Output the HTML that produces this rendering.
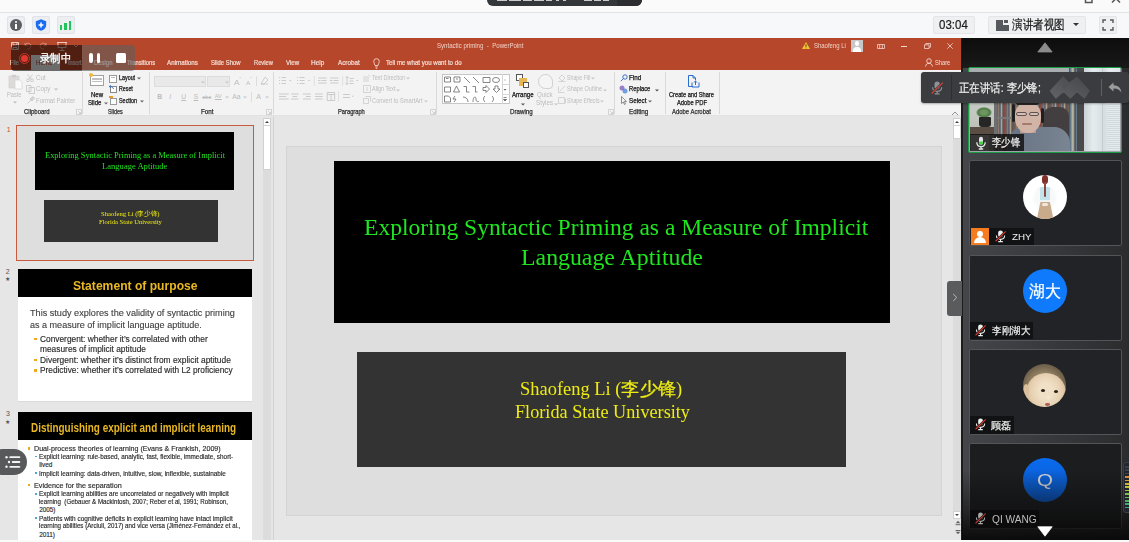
<!DOCTYPE html><html><head><meta charset="utf-8">
<style>
*{box-sizing:border-box;margin:0;padding:0}
html,body{width:1129px;height:542px;overflow:hidden}
body{position:relative;background:#fafafa;font-family:"Liberation Sans",sans-serif;color:#222}
.a{position:absolute}
.t{position:absolute;white-space:nowrap;line-height:1;transform-origin:0 0}
svg.a{overflow:visible}
</style></head><body>
<div class="a" style="left:0px;top:0px;width:1129px;height:12px;background:#fafafa;"></div>
<div class="a" style="left:487px;top:-10px;width:155px;height:16px;background:#34373a;border-radius:0 0 6px 6px"></div>
<div class="a" style="left:617px;top:-10px;width:25px;height:16px;background:#2b2d30;border-radius:0 0 6px 0"></div>
<div class="a" style="left:497px;top:0px;width:10px;height:1px;background:rgba(255,255,255,0.75);"></div>
<div class="a" style="left:509px;top:0px;width:12px;height:1px;background:rgba(255,255,255,0.75);"></div>
<div class="a" style="left:523px;top:0px;width:9px;height:1px;background:rgba(255,255,255,0.75);"></div>
<div class="a" style="left:534px;top:0px;width:10px;height:1px;background:rgba(255,255,255,0.75);"></div>
<div class="a" style="left:546px;top:0px;width:6px;height:1px;background:rgba(255,255,255,0.75);"></div>
<div class="a" style="left:556px;top:0px;width:3px;height:1px;background:rgba(255,255,255,0.75);"></div>
<div class="a" style="left:563px;top:0px;width:3px;height:1px;background:rgba(255,255,255,0.75);"></div>
<div class="a" style="left:584px;top:0px;width:8px;height:1px;background:rgba(255,255,255,0.75);"></div>
<div class="a" style="left:594px;top:0px;width:7px;height:1px;background:rgba(255,255,255,0.75);"></div>
<div class="a" style="left:603px;top:0px;width:6px;height:1px;background:rgba(255,255,255,0.75);"></div>
<div class="a" style="left:0px;top:12px;width:1129px;height:1px;background:#e3e3e3;"></div>
<div class="a" style="left:0px;top:13px;width:1129px;height:25px;background:#f7f8fa;"></div>
<div class="a" style="left:7px;top:16px;width:18px;height:18px;background:#eceef1;border:1px solid #e0e3e7;border-radius:2px"></div>
<div class="a" style="left:32px;top:16px;width:18px;height:18px;background:#eceef1;border:1px solid #e0e3e7;border-radius:2px"></div>
<div class="a" style="left:57px;top:16px;width:18px;height:18px;background:#eceef1;border:1px solid #e0e3e7;border-radius:2px"></div>
<div class="a" style="left:10px;top:19px;width:12px;height:12px;border-radius:50%;background:#5c5e62"></div>
<div class="a" style="left:15px;top:21px;width:2px;height:2px;background:#fff;border-radius:1px"></div>
<div class="a" style="left:15px;top:24px;width:2px;height:5px;background:#fff;"></div>
<svg class="a" style="left:35px;top:19px" width="12" height="12" viewBox="0 0 12 12"><path d="M6 0.3 L11.2 2.2 V6 C11.2 9 9 10.8 6 11.8 C3 10.8 0.8 9 0.8 6 V2.2 Z" fill="#1a6cf5"></path><path d="M6 3.6V8.4M3.6 6H8.4" stroke="#fff" stroke-width="1.5"></path></svg>
<div class="a" style="left:59.5px;top:25px;width:2.7px;height:5px;background:#20c45b;"></div>
<div class="a" style="left:64.3px;top:22.5px;width:2.7px;height:7.5px;background:#20c45b;"></div>
<div class="a" style="left:68.5px;top:20.5px;width:2.7px;height:9.5px;background:#20c45b;"></div>
<div class="a" style="left:933px;top:16px;width:42px;height:18px;background:#eef0f2;border:1px solid #e3e5e8;border-radius:2px"></div>
<div class="t" style="left: 938.9px; top: 19px; font-size: 12.4px; color: rgb(26, 26, 26); --b: 29; --w: 28.79px; -webkit-text-stroke: 0.2px rgb(26, 26, 26); transform: scaleX(0.9282); transform-origin: 0px 0px;">03:04</div>
<div class="a" style="left:988px;top:16px;width:98px;height:18px;background:#eef0f2;border:1px solid #e3e5e8;border-radius:2px"></div>
<div class="a" style="left:996px;top:19.5px;width:12.5px;height:11px;background:#55585c;"></div>
<div class="a" style="left:1003px;top:19.5px;width:5.5px;height:5px;background:#eef0f2;"></div>
<div class="a" style="left:1004.3px;top:19.5px;width:4.2px;height:3.8px;background:#55585c;"></div>
<div class="t" style="left: 1011.6px; top: 18.95px; font-size: 12.5px; color: rgb(26, 26, 26); --w: 52.80px; -webkit-text-stroke: 0.25px rgb(26, 26, 26); transform: scaleX(0.8123); transform-origin: 0px 0px;">演讲者视图</div>
<div class="a" style="left:1072.5px;top:23px;width:0;height:0;border-left:3.5px solid transparent;border-right:3.5px solid transparent;border-top:3.5px solid #333"></div>
<div class="a" style="left:1099px;top:16px;width:18px;height:18px;background:#eef0f2;border:1px solid #e3e5e8;border-radius:2px"></div>
<svg class="a" style="left:1102px;top:19px" width="12" height="12" viewBox="0 0 12 12" fill="none" stroke="#55585c" stroke-width="1.4"><path d="M1 4V1H4M8 1H11V4M11 8V11H8M4 11H1V8"></path></svg>
<svg class="a" style="left:1084px;top:-5px" width="12" height="9" viewBox="0 0 12 9" fill="none" stroke="#555" stroke-width="1.5"><path d="M1.5 1V7.5H8V1M8 3H10V1"></path></svg>
<svg class="a" style="left:1110px;top:-6px" width="12" height="9" viewBox="0 0 12 9" fill="none" stroke="#555" stroke-width="1.5"><path d="M2 8.5L10 0.5M2 0.5L10 8.5"></path></svg>
<div class="a" style="left:0px;top:38px;width:962px;height:32px;background:#b7472a;"></div>
<svg class="a" style="left:10px;top:41px" width="75" height="10" viewBox="0 0 75 10" fill="none" stroke="#f3d6ce" stroke-width="0.9">
<path d="M1.5 1.5H8.5V8.5H1.5Z M3 1.5V4H7V1.5 M3 8.5V6.5H7V8.5"></path>
<path d="M15 4.5A3 3 0 1 1 17 8 M15 2V4.5H17.5" opacity=".5"></path>
<path d="M36 4.5A3 3 0 1 0 34 8 M36 2V4.5H33.5" opacity=".5"></path>
<path d="M47 1.5H57 M48 1.5V6.5H56V1.5 M52 6.5V9 M49.5 9.5H54.5"></path>
<path d="M64 4L66 6L68 4" stroke-width="0.8"></path>
</svg>
<div class="t" style="left: 437.24px; top: 43.0131px; font-size: 6.6px; color: rgb(240, 208, 198); --b: 48.4; --w: 86.33px; transform: scaleX(0.9238); transform-origin: 0px 0px;">Syntactic priming&nbsp; - &nbsp;PowerPoint</div>
<svg class="a" style="left:802px;top:42px" width="8" height="7" viewBox="0 0 8 7"><path d="M4 0L8 7H0Z" fill="#f4c431"></path><path d="M4 2.3V4.8M4 5.6V6.3" stroke="#333" stroke-width="0.9"></path></svg>
<div class="t" style="left: 814.24px; top: 43.0131px; font-size: 6.6px; color: rgb(240, 208, 198); --b: 48.4; --w: 31.83px; transform: scaleX(0.9042); transform-origin: 0px 0px;">Shaofeng Li</div>
<div class="a" style="left:851px;top:39.5px;width:12px;height:12px;background:#c7c7c7;"></div>
<div class="a" style="left:855px;top:41.3px;width:4px;height:4.5px;background:#fff;border-radius:50%"></div>
<div class="a" style="left:853px;top:46.5px;width:8px;height:5px;background:#fff;border-radius:4px 4px 0 0"></div>
<svg class="a" style="left:876.5px;top:43.5px" width="8" height="5" viewBox="0 0 8 5" fill="none" stroke="#f3d6ce" stroke-width="0.8"><path d="M0.5 0.5H7.5V4.5H0.5Z M2.7 0.5V4.5 M5.3 0.5V4.5"></path></svg>
<div class="a" style="left:901.3px;top:46px;width:5.5px;height:0.8px;background:#f3d6ce;"></div>
<svg class="a" style="left:923.5px;top:43px" width="7" height="6" viewBox="0 0 7 6" fill="none" stroke="#f3d6ce" stroke-width="0.8"><path d="M0.5 1.8H5V5.5H0.5Z M1.8 1.8V0.5H6.5V4.2H5"></path></svg>
<svg class="a" style="left:946.8px;top:43px" width="6" height="6" viewBox="0 0 6 6" fill="none" stroke="#f3d6ce" stroke-width="0.8"><path d="M0.3 0.3L5.7 5.7M5.7 0.3L0.3 5.7"></path></svg>
<svg class="a" style="left:925px;top:58px" width="9" height="9" viewBox="0 0 9 9" fill="none" stroke="#f3d6ce" stroke-width="0.9"><circle cx="4" cy="3" r="2.3"></circle><path d="M0.5 8.5C1 6 2.5 5.3 4 5.3C5.5 5.3 7 6 7.5 8.5"></path></svg>
<div class="t" style="left: 934.73px; top: 60.0087px; font-size: 6.8px; color: rgb(243, 221, 214); --b: 64.8; --w: 15.24px; transform: scaleX(0.8401); transform-origin: 0px 0px;">Share</div>
<div class="a" style="left:31px;top:55px;width:29px;height:15px;background:#f3f3f3;"></div>
<div class="t" style="left: 10.13px; top: 60.0087px; font-size: 6.8px; color: rgb(243, 221, 214); --b: 64.8; --w: 8.94px; -webkit-text-stroke: 0.2px rgb(243, 221, 214); transform: scaleX(0.8162); transform-origin: 0px 0px;">File</div>
<div class="t" style="left: 67.53px; top: 60.0087px; font-size: 6.8px; color: rgb(243, 221, 214); --b: 64.8; --w: 13.64px; -webkit-text-stroke: 0.2px rgb(243, 221, 214); transform: scaleX(0.8024); transform-origin: 0px 0px;">Insert</div>
<div class="t" style="left: 94.43px; top: 60.0087px; font-size: 6.8px; color: rgb(243, 221, 214); --b: 64.8; --w: 18.44px; -webkit-text-stroke: 0.2px rgb(243, 221, 214); transform: scaleX(0.871); transform-origin: 0px 0px;">Design</div>
<div class="t" style="left: 126.73px; top: 60.0087px; font-size: 6.8px; color: rgb(243, 221, 214); --b: 64.8; --w: 28.04px; -webkit-text-stroke: 0.2px rgb(243, 221, 214); transform: scaleX(0.8497); transform-origin: 0px 0px;">Transitions</div>
<div class="t" style="left: 167.43px; top: 60.0087px; font-size: 6.8px; color: rgb(243, 221, 214); --b: 64.8; --w: 30.94px; -webkit-text-stroke: 0.2px rgb(243, 221, 214); transform: scaleX(0.9201); transform-origin: 0px 0px;">Animations</div>
<div class="t" style="left: 211.23px; top: 60.0087px; font-size: 6.8px; color: rgb(243, 221, 214); --b: 64.8; --w: 29.44px; -webkit-text-stroke: 0.2px rgb(243, 221, 214); transform: scaleX(0.8655); transform-origin: 0px 0px;">Slide Show</div>
<div class="t" style="left: 253.63px; top: 60.0087px; font-size: 6.8px; color: rgb(243, 221, 214); --b: 64.8; --w: 18.84px; -webkit-text-stroke: 0.2px rgb(243, 221, 214); transform: scaleX(0.845); transform-origin: 0px 0px;">Review</div>
<div class="t" style="left: 285.63px; top: 60.0087px; font-size: 6.8px; color: rgb(243, 221, 214); --b: 64.8; --w: 13.04px; -webkit-text-stroke: 0.2px rgb(243, 221, 214); transform: scaleX(0.8926); transform-origin: 0px 0px;">View</div>
<div class="t" style="left: 311.33px; top: 60.0087px; font-size: 6.8px; color: rgb(243, 221, 214); --b: 64.8; --w: 13.24px; -webkit-text-stroke: 0.2px rgb(243, 221, 214); transform: scaleX(0.9468); transform-origin: 0px 0px;">Help</div>
<div class="t" style="left: 337.63px; top: 60.0087px; font-size: 6.8px; color: rgb(243, 221, 214); --b: 64.8; --w: 21.64px; -webkit-text-stroke: 0.2px rgb(243, 221, 214); transform: scaleX(0.9233); transform-origin: 0px 0px;">Acrobat</div>
<div class="t" style="left: 386.43px; top: 60.0087px; font-size: 6.8px; color: rgb(243, 221, 214); --b: 64.8; --w: 75.54px; -webkit-text-stroke: 0.2px rgb(243, 221, 214); transform: scaleX(0.9006); transform-origin: 0px 0px;">Tell me what you want to do</div>
<div class="t" style="left: 36.43px; top: 60.0087px; font-size: 6.8px; color: rgb(183, 71, 42); --b: 64.8; --w: 16.64px; transform: scaleX(0.9173); transform-origin: 0px 0px;">Home</div>
<svg class="a" style="left:373px;top:57.5px" width="7" height="11" viewBox="0 0 7 11" fill="none" stroke="#f3d6ce" stroke-width="0.9"><path d="M2 7.5C2 6 0.7 5.3 0.7 3.5A2.8 2.8 0 0 1 6.3 3.5C6.3 5.3 5 6 5 7.5Z M2.3 9H4.7 M2.8 10.3H4.2"></path></svg>
<div class="a" style="left:0px;top:70px;width:962px;height:46px;background:#f3f3f3;"></div>
<div class="a" style="left:0px;top:115px;width:962px;height:1px;background:#e2e2e2;"></div>
<svg class="a" style="left:8px;top:74px" width="15" height="16" viewBox="0 0 15 16"><rect x="1" y="2" width="10" height="12" fill="#dedada" stroke="#d2cece" stroke-width="0.6"></rect><rect x="4" y="0.8" width="4" height="2.5" fill="#d0cccc"></rect><path d="M7 6H12L14 8V15H7Z" fill="#fafafa" stroke="#d2d2d2" stroke-width="0.6"></path></svg>
<div class="t" style="left: 7.44px; top: 92.0094px; font-size: 6.5px; color: rgb(188, 188, 188); --b: 96.9; --w: 14.52px; transform: scaleX(0.8734); transform-origin: 0px 0px;">Paste</div>
<svg class="a" style="left:12.5px;top:101px" width="4" height="3" viewBox="0 0 4 3"><path d="M0 0.5H4L2 2.5Z" fill="#bcbcbc"></path></svg>
<svg class="a" style="left:26px;top:74px" width="8" height="8" viewBox="0 0 8 8" fill="none" stroke="#c4c4c4" stroke-width="0.8"><circle cx="2" cy="6.3" r="1.4"></circle><circle cx="6" cy="6.3" r="1.4"></circle><path d="M2.8 5.2L6.5 0.5M5.2 5.2L1.5 0.5"></path></svg>
<div class="t" style="left: 35.84px; top: 75.0031px; font-size: 6.5px; color: rgb(188, 188, 188); --b: 79.8; --w: 9.62px; transform: scaleX(0.9501); transform-origin: 0px 0px;">Cut</div>
<svg class="a" style="left:25.5px;top:85px" width="9" height="9" viewBox="0 0 9 9" fill="none" stroke="#c4c4c4" stroke-width="0.8"><path d="M0.5 0.5H5V6.5H0.5Z M3 2.5H8.5V8.5H3Z"></path></svg>
<div class="t" style="left: 35.64px; top: 86.0062px; font-size: 6.5px; color: rgb(188, 188, 188); --b: 91.1; --w: 14.42px; transform: scaleX(0.9495); transform-origin: 0px 0px;">Copy</div>
<svg class="a" style="left:54px;top:88px" width="4" height="3" viewBox="0 0 4 3"><path d="M0 0.5H4L2 2.5Z" fill="#bcbcbc"></path></svg>
<svg class="a" style="left:26.5px;top:96px" width="8" height="8" viewBox="0 0 8 8"><path d="M0.5 7.5L4 4M3 3L6 0.5L7.5 2L5 5Z" stroke="#cbcbcb" fill="#d6d6d6" stroke-width="0.9"></path></svg>
<div class="t" style="left: 35.74px; top: 98.0125px; font-size: 6.5px; color: rgb(188, 188, 188); --b: 102.7; --w: 39.32px; transform: scaleX(0.9144); transform-origin: 0px 0px;">Format Painter</div>
<div class="t" style="left: 23.84px; top: 109.013px; font-size: 6.5px; color: rgb(46, 46, 46); --b: 113.7; --w: 25.72px; -webkit-text-stroke: 0.25px rgb(46, 46, 46); transform: scaleX(0.9242); transform-origin: 0px 0px;">Clipboard</div>
<svg class="a" style="left:76px;top:109px" width="6" height="6" viewBox="0 0 6 6" fill="none" stroke="#bdbdbd" stroke-width="0.6"><path d="M0.5 0.5H5.5V5.5H0.5Z M2 2L4.5 4.5M4.5 3V4.5H3"></path></svg>
<div class="a" style="left:82px;top:72px;width:1px;height:42px;background:#d9d9d9;"></div>
<div class="a" style="left:90px;top:75px;width:14px;height:11px;background:#fff;border:1px solid #a0a0a0"></div>
<div class="a" style="left:92px;top:78px;width:10px;height:2px;background:#c0c0c0;"></div>
<div class="a" style="left:92px;top:81px;width:10px;height:1px;background:#c0c0c0;"></div>
<div class="a" style="left:89px;top:73px;width:4px;height:4px;background:#f0b93a;border-radius:50%"></div>
<div class="t" style="left: 91.14px; top: 92.0094px; font-size: 6.5px; color: rgb(20, 20, 20); --b: 96.9; --w: 12.12px; -webkit-text-stroke: 0.25px rgb(20, 20, 20); transform: scaleX(0.9312); transform-origin: 0px 0px;">New</div>
<div class="t" style="left: 88.44px; top: 100.006px; font-size: 6.5px; color: rgb(20, 20, 20); --b: 105.1; --w: 13.32px; -webkit-text-stroke: 0.25px rgb(20, 20, 20); transform: scaleX(0.9206); transform-origin: 0px 0px;">Slide</div>
<svg class="a" style="left:104px;top:102px" width="4" height="3" viewBox="0 0 4 3"><path d="M0 0.5H4L2 2.5Z" fill="#666"></path></svg>
<div class="a" style="left:109px;top:74.5px;width:8px;height:8px;background:#fff;border:1px solid #999"></div>
<div class="a" style="left:111px;top:76.5px;width:4px;height:1px;background:#bbb;"></div>
<div class="t" style="left: 118.64px; top: 75.0031px; font-size: 6.5px; color: rgb(20, 20, 20); --b: 79.8; --w: 16.12px; -webkit-text-stroke: 0.25px rgb(20, 20, 20); transform: scaleX(0.8253); transform-origin: 0px 0px;">Layout</div>
<svg class="a" style="left:137px;top:77px" width="4" height="3" viewBox="0 0 4 3"><path d="M0 0.5H4L2 2.5Z" fill="#666"></path></svg>
<div class="a" style="left:109.5px;top:86px;width:7.5px;height:7px;background:#fff;border:1px solid #888"></div>
<svg class="a" style="left:108px;top:84.5px" width="6" height="5" viewBox="0 0 6 5" fill="none" stroke="#2d6ec2" stroke-width="0.9"><path d="M5.5 4C5 2 3.5 1.5 1.5 1.5M2.8 0.3L1.2 1.5L2.8 2.7"></path></svg>
<div class="t" style="left: 118.64px; top: 86.0062px; font-size: 6.5px; color: rgb(20, 20, 20); --b: 91.1; --w: 13.82px; -webkit-text-stroke: 0.25px rgb(20, 20, 20); transform: scaleX(0.8137); transform-origin: 0px 0px;">Reset</div>
<div class="a" style="left:110px;top:97.5px;width:7px;height:7px;background:#fff;border:1px solid #999"></div>
<div class="a" style="left:109px;top:96px;width:4px;height:2px;background:#e89a2c;"></div>
<div class="t" style="left: 118.64px; top: 98.0125px; font-size: 6.5px; color: rgb(20, 20, 20); --b: 102.7; --w: 18.12px; -webkit-text-stroke: 0.25px rgb(20, 20, 20); transform: scaleX(0.8355); transform-origin: 0px 0px;">Section</div>
<svg class="a" style="left:139.5px;top:100px" width="4" height="3" viewBox="0 0 4 3"><path d="M0 0.5H4L2 2.5Z" fill="#666"></path></svg>
<div class="t" style="left: 108.44px; top: 109.013px; font-size: 6.5px; color: rgb(46, 46, 46); --b: 113.7; --w: 14.72px; -webkit-text-stroke: 0.25px rgb(46, 46, 46); transform: scaleX(0.8308); transform-origin: 0px 0px;">Slides</div>
<div class="a" style="left:149px;top:72px;width:1px;height:42px;background:#d9d9d9;"></div>
<div class="a" style="left:153.5px;top:75.5px;width:52px;height:11.5px;background:#e9e9e9;border:1px solid #dcdcdc"></div>
<svg class="a" style="left:201px;top:80.5px" width="4" height="3" viewBox="0 0 4 3"><path d="M0 0.5H4L2 2.5Z" fill="#c8c8c8"></path></svg>
<div class="a" style="left:207px;top:75.5px;width:22.5px;height:11.5px;background:#e9e9e9;border:1px solid #dcdcdc"></div>
<svg class="a" style="left:225px;top:80.5px" width="4" height="3" viewBox="0 0 4 3"><path d="M0 0.5H4L2 2.5Z" fill="#c8c8c8"></path></svg>
<div class="t" style="left: 233.72px; top: 79.0075px; font-size: 7px; color: rgb(188, 188, 188); --b: 84.5; --w: 5.56px; transform: scaleX(1.1901); transform-origin: 0px 0px;">A</div>
<div class="t" style="left: 239.3px; top: 77.0044px; font-size: 5px; color: rgb(188, 188, 188); --b: 81;">ˆ</div>
<div class="t" style="left: 245.77px; top: 81.0119px; font-size: 5.8px; color: rgb(188, 188, 188); --b: 84.5; --w: 4.46px; transform: scaleX(1.151); transform-origin: 0px 0px;">A</div>
<div class="t" style="left: 250.32px; top: 78.0025px; font-size: 4.5px; color: rgb(188, 188, 188); --b: 81;">ˇ</div>
<div class="a" style="left:256px;top:76px;width:1px;height:10px;background:#dddddd;"></div>
<svg class="a" style="left:260px;top:76px" width="9" height="9" viewBox="0 0 9 9" fill="none" stroke="#c4c4c4" stroke-width="0.8"><path d="M1 8L5 1L8 4L4 8Z M1 8H8"></path></svg>
<div class="t" style="left: 157.23px; top: 94.0056px; font-size: 6.8px; color: rgb(188, 188, 188); --b: 98.5;"><b>B</b></div>
<div class="t" style="left: 169.23px; top: 94.0056px; font-size: 6.8px; color: rgb(188, 188, 188); --b: 98.5;"><i>I</i></div>
<div class="t" style="left: 181.23px; top: 94.0056px; font-size: 6.8px; color: rgb(188, 188, 188); --b: 98.5;"><u>U</u></div>
<div class="t" style="left: 193.73px; top: 94.0056px; font-size: 6.8px; color: rgb(188, 188, 188); --b: 98.5;"><u>S</u></div>
<div class="t" style="left: 202.28px; top: 95.0119px; font-size: 5.5px; color: rgb(188, 188, 188); --b: 98.5;"><s>abc</s></div>
<div class="t" style="left: 214.78px; top: 94.0119px; font-size: 5.5px; color: rgb(188, 188, 188); --b: 97.5;"><u>AV</u></div>
<svg class="a" style="left:225px;top:96px" width="4" height="3" viewBox="0 0 4 3"><path d="M0 0.5H4L2 2.5Z" fill="#c8c8c8"></path></svg>
<div class="t" style="left: 232.23px; top: 94.0056px; font-size: 6.8px; color: rgb(188, 188, 188); --b: 98.5;">Aa</div>
<svg class="a" style="left:243px;top:96px" width="4" height="3" viewBox="0 0 4 3"><path d="M0 0.5H4L2 2.5Z" fill="#c8c8c8"></path></svg>
<div class="a" style="left:250.5px;top:92px;width:1px;height:10px;background:#dddddd;"></div>
<div class="t" style="left: 256.22px; top: 93.0075px; font-size: 7px; color: rgb(188, 188, 188); --b: 98.5;">A</div>
<svg class="a" style="left:265px;top:96px" width="4" height="3" viewBox="0 0 4 3"><path d="M0 0.5H4L2 2.5Z" fill="#c8c8c8"></path></svg>
<div class="t" style="left: 201.04px; top: 109.013px; font-size: 6.5px; color: rgb(46, 46, 46); --b: 113.7; --w: 12.52px; -webkit-text-stroke: 0.25px rgb(46, 46, 46); transform: scaleX(0.9619); transform-origin: 0px 0px;">Font</div>
<svg class="a" style="left:266px;top:109px" width="6" height="6" viewBox="0 0 6 6" fill="none" stroke="#bdbdbd" stroke-width="0.6"><path d="M0.5 0.5H5.5V5.5H0.5Z M2 2L4.5 4.5M4.5 3V4.5H3"></path></svg>
<div class="a" style="left:273.3px;top:72px;width:1px;height:42px;background:#d9d9d9;"></div>
<svg class="a" style="left:278px;top:75px" width="150" height="32" viewBox="0 0 150 32" fill="none" stroke="#c6c6c6" stroke-width="0.9">
<path d="M1 2.5H2M3.5 2.5H8M1 5.5H2M3.5 5.5H8M1 8.5H2M3.5 8.5H8"></path><path d="M11 5H13.5L12.25 6.3Z" fill="#c6c6c6" stroke="none"></path>
<path d="M19 2.5H20M21.5 2.5H26.6M19 5.5H20M21.5 5.5H26.6M19 8.5H20M21.5 8.5H26.6"></path><path d="M29.8 5H32.3L31.05 6.3Z" fill="#c6c6c6" stroke="none"></path>
<path d="M36.4 1V11" stroke="#dedede"></path>
<path d="M40.2 3H48.5M43.5 5.5H48.5M40.2 8H48.5M40.2 5.5H42.5"></path><path d="M52.2 3H60.5M55.5 5.5H60.5M52.2 8H60.5M51.8 5.5H54.5"></path>
<path d="M64.6 1V11" stroke="#dedede"></path>
<path d="M69 1.5V9.5M67.5 3L69 1.5L70.5 3M67.5 8L69 9.5L70.5 8M71.5 3.5H75.6M71.5 6H75.6M71.5 8.5H75.6"></path><path d="M78 5H80.5L79.25 6.3Z" fill="#c6c6c6" stroke="none"></path>
<path d="M1 19H10.8M1 21.5H8M1 24H10.8"></path><path d="M13 19H20.6M14.5 21.5H19.1M13 24H20.6"></path><path d="M25 19H32.7M28 21.5H32.7M25 24H32.7"></path><path d="M37 19H44.7M37 21.5H44.7M37 24H44.7"></path>
<path d="M49.2 17.5H56.7V25.5H49.2ZM49.2 19.5H56.7M53 19.5V25.5"></path>
<path d="M60.5 16V27" stroke="#dedede"></path>
<path d="M65 19.5H71.8M65 22.5H71.8"></path><path d="M73.5 20.8H76L74.75 22.1Z" fill="#c6c6c6" stroke="none"></path>
</svg>
<svg class="a" style="left:362.5px;top:74px" width="8" height="8" viewBox="0 0 8 8" fill="none" stroke="#c6c6c6" stroke-width="0.7"><path d="M1 2V8M3 2V8M5 2V8M5.5 0.5L7 2.5"></path></svg>
<div class="t" style="left: 372.14px; top: 75.0031px; font-size: 6.5px; color: rgb(188, 188, 188); --b: 79.8; --w: 33.12px; transform: scaleX(0.8411); transform-origin: 0px 0px;">Text Direction</div>
<svg class="a" style="left:406px;top:77px" width="4" height="3" viewBox="0 0 4 3"><path d="M0 0.5H4L2 2.5Z" fill="#c8c8c8"></path></svg>
<svg class="a" style="left:362.5px;top:85px" width="8" height="8" viewBox="0 0 8 8" fill="none" stroke="#c6c6c6" stroke-width="0.7"><path d="M0.5 0.5H7.5V7.5H0.5Z M4 2V6"></path></svg>
<div class="t" style="left: 372.14px; top: 86.0062px; font-size: 6.5px; color: rgb(188, 188, 188); --b: 91.1; --w: 23.62px; transform: scaleX(0.8412); transform-origin: 0px 0px;">Align Text</div>
<svg class="a" style="left:396px;top:88.5px" width="4" height="3" viewBox="0 0 4 3"><path d="M0 0.5H4L2 2.5Z" fill="#c8c8c8"></path></svg>
<svg class="a" style="left:362.5px;top:96px" width="8" height="8" viewBox="0 0 8 8" fill="none" stroke="#c6c6c6" stroke-width="0.7"><path d="M0.5 2.5H5.5V7.5H0.5Z M2.5 0.5H7.5V5.5"></path></svg>
<div class="t" style="left: 372.14px; top: 98.0125px; font-size: 6.5px; color: rgb(188, 188, 188); --b: 102.7; --w: 50.62px; transform: scaleX(0.8813); transform-origin: 0px 0px;">Convert to SmartArt</div>
<svg class="a" style="left:423.5px;top:100px" width="4" height="3" viewBox="0 0 4 3"><path d="M0 0.5H4L2 2.5Z" fill="#c8c8c8"></path></svg>
<div class="t" style="left: 337.54px; top: 109.013px; font-size: 6.5px; color: rgb(46, 46, 46); --b: 113.7; --w: 26.82px; -webkit-text-stroke: 0.25px rgb(46, 46, 46); transform: scaleX(0.8834); transform-origin: 0px 0px;">Paragraph</div>
<svg class="a" style="left:430px;top:109px" width="6" height="6" viewBox="0 0 6 6" fill="none" stroke="#bdbdbd" stroke-width="0.6"><path d="M0.5 0.5H5.5V5.5H0.5Z M2 2L4.5 4.5M4.5 3V4.5H3"></path></svg>
<div class="a" style="left:436.4px;top:72px;width:1px;height:42px;background:#d9d9d9;"></div>
<div class="a" style="left:441.5px;top:73.5px;width:68.5px;height:30.5px;background:#fff;border:1px solid #c6c6c6"></div>
<div class="a" style="left:502px;top:73.5px;width:1px;height:30.5px;background:#d6d6d6;"></div>
<div class="a" style="left:502px;top:83.5px;width:8px;height:1px;background:#d6d6d6;"></div>
<div class="a" style="left:502px;top:93.5px;width:8px;height:1px;background:#d6d6d6;"></div>
<svg class="a" style="left:443px;top:74.5px" width="68" height="30" viewBox="0 0 68 30" fill="none" stroke="#555" stroke-width="0.7">
<path d="M1.5 2H7.5V7H1.5Z M3 3.5H5.5"></path><path d="M11 2H17V7H11Z M13 4H15"></path><path d="M21 2L27 8"></path><path d="M30 2L36 8"></path><path d="M40 2.5H47V7.5H40Z"></path><ellipse cx="53" cy="5" rx="3.5" ry="2.5"></ellipse>
<path d="M1.5 12H7.5V17H1.5Z"></path><path d="M13.5 11L16.5 17H10.5Z"></path><path d="M20.5 11.5H23.5V17H26.5"></path><path d="M29.5 11.5H32.5V17H34.5"></path><path d="M40 12.5H43V10.5L46.5 14L43 17.5V15.5H40Z"></path><path d="M52 11V14H50L53.5 17.5L57 14H55V11Z"></path>
<path d="M1.5 21H5.5L7.5 23V27H1.5Z"></path><path d="M12 21L10 24H13L11 27"></path><path d="M20 22C23 22 25 24 25 27"></path><path d="M30 27C30 21 33 21 33 24C33 27 35 27 36 26"></path><path d="M42 21C40.5 22 41 24 40 24C41 24 40.5 26 42 27"></path><path d="M49 21C50.5 22 50 24 51 24C50 24 50.5 26 49 27"></path>
<path d="M61 5H63" stroke="#aaa"></path><path d="M60.5 14H63.5L62 15.5Z" fill="#555" stroke="none"></path><path d="M60.5 22.5H63.5M60.5 24.5H63.5L62 26Z" fill="#555"></path>
</svg>
<div class="a" style="left:515.5px;top:74px;width:7px;height:7px;background:#fff;border:1px solid #555"></div>
<div class="a" style="left:519px;top:78px;width:8px;height:8px;background:#e8b755;"></div>
<div class="a" style="left:523px;top:82px;width:6px;height:6px;background:#fff;border:1px solid #555"></div>
<div class="t" style="left: 512.14px; top: 92.0094px; font-size: 6.5px; color: rgb(20, 20, 20); --b: 96.9; --w: 21.62px; -webkit-text-stroke: 0.25px rgb(20, 20, 20); transform: scaleX(0.9349); transform-origin: 0px 0px;">Arrange</div>
<svg class="a" style="left:521px;top:102.5px" width="4" height="3" viewBox="0 0 4 3"><path d="M0 0.5H4L2 2.5Z" fill="#555"></path></svg>
<div class="a" style="left:538px;top:74px;width:15px;height:15px;border-radius:50% 50% 25% 50%;background:#f5f5f5;border:1px solid #d0d0d0"></div>
<div class="t" style="left: 537.44px; top: 92.0094px; font-size: 6.5px; color: rgb(188, 188, 188); --b: 96.9; --w: 15.62px; transform: scaleX(0.9395); transform-origin: 0px 0px;">Quick</div>
<div class="t" style="left: 535.74px; top: 100.006px; font-size: 6.5px; color: rgb(188, 188, 188); --b: 105.1; --w: 17.02px; transform: scaleX(0.9614); transform-origin: 0px 0px;">Styles</div>
<svg class="a" style="left:553.5px;top:102.5px" width="4" height="3" viewBox="0 0 4 3"><path d="M0 0.5H4L2 2.5Z" fill="#c8c8c8"></path></svg>
<svg class="a" style="left:557.5px;top:73.5px" width="8" height="8" viewBox="0 0 8 8" fill="none" stroke="#c6c6c6" stroke-width="0.7"><path d="M1 4L4 1L7 4L4 7Z M0.5 7.5H7.5"></path></svg>
<div class="t" style="left: 566.84px; top: 75.0031px; font-size: 6.5px; color: rgb(188, 188, 188); --b: 79.8; --w: 23.42px; transform: scaleX(0.8102); transform-origin: 0px 0px;">Shape Fill</div>
<svg class="a" style="left:591px;top:77px" width="4" height="3" viewBox="0 0 4 3"><path d="M0 0.5H4L2 2.5Z" fill="#c8c8c8"></path></svg>
<svg class="a" style="left:557.5px;top:85px" width="8" height="8" viewBox="0 0 8 8" fill="none" stroke="#c6c6c6" stroke-width="0.7"><path d="M0.5 1.5V7.5H6.5M2 6L7 1"></path></svg>
<div class="t" style="left: 566.74px; top: 86.0062px; font-size: 6.5px; color: rgb(188, 188, 188); --b: 91.1; --w: 35.02px; transform: scaleX(0.8499); transform-origin: 0px 0px;">Shape Outline</div>
<svg class="a" style="left:602.5px;top:88.5px" width="4" height="3" viewBox="0 0 4 3"><path d="M0 0.5H4L2 2.5Z" fill="#c8c8c8"></path></svg>
<svg class="a" style="left:557.5px;top:96px" width="8" height="8" viewBox="0 0 8 8" fill="none" stroke="#c6c6c6" stroke-width="0.7"><path d="M0.5 1.5H6.5V7.5H0.5Z M6.5 3H7.5V7.5"></path></svg>
<div class="t" style="left: 566.74px; top: 98.0125px; font-size: 6.5px; color: rgb(188, 188, 188); --b: 102.7; --w: 32.52px; transform: scaleX(0.8058); transform-origin: 0px 0px;">Shape Effects</div>
<svg class="a" style="left:600px;top:100px" width="4" height="3" viewBox="0 0 4 3"><path d="M0 0.5H4L2 2.5Z" fill="#c8c8c8"></path></svg>
<div class="t" style="left: 509.94px; top: 109.013px; font-size: 6.5px; color: rgb(46, 46, 46); --b: 113.7; --w: 22.62px; -webkit-text-stroke: 0.25px rgb(46, 46, 46); transform: scaleX(0.9487); transform-origin: 0px 0px;">Drawing</div>
<svg class="a" style="left:608px;top:109px" width="6" height="6" viewBox="0 0 6 6" fill="none" stroke="#bdbdbd" stroke-width="0.6"><path d="M0.5 0.5H5.5V5.5H0.5Z M2 2L4.5 4.5M4.5 3V4.5H3"></path></svg>
<div class="a" style="left:614.3px;top:72px;width:1px;height:42px;background:#d9d9d9;"></div>
<svg class="a" style="left:619.8px;top:74px" width="8" height="8" viewBox="0 0 8 8" fill="none" stroke="#2a64c0" stroke-width="0.9"><circle cx="5" cy="3" r="2.2"></circle><path d="M3.4 4.6L0.8 7.2"></path></svg>
<div class="t" style="left: 629.34px; top: 75.0031px; font-size: 6.5px; color: rgb(20, 20, 20); --b: 79.8; --w: 12.12px; -webkit-text-stroke: 0.25px rgb(20, 20, 20); transform: scaleX(0.9576); transform-origin: 0px 0px;">Find</div>
<svg class="a" style="left:619px;top:84.5px" width="10" height="9" viewBox="0 0 10 9"><circle cx="3" cy="3" r="2.5" fill="#9a7ec8"></circle><circle cx="6" cy="6" r="2.5" fill="#4d8ad8" opacity=".8"></circle></svg>
<div class="t" style="left: 629.34px; top: 86.0062px; font-size: 6.5px; color: rgb(20, 20, 20); --b: 91.1; --w: 21.32px; -webkit-text-stroke: 0.25px rgb(20, 20, 20); transform: scaleX(0.8936); transform-origin: 0px 0px;">Replace</div>
<svg class="a" style="left:655px;top:88.5px" width="4" height="3" viewBox="0 0 4 3"><path d="M0 0.5H4L2 2.5Z" fill="#555"></path></svg>
<svg class="a" style="left:621px;top:96px" width="6" height="9" viewBox="0 0 6 9" fill="none" stroke="#666" stroke-width="0.7"><path d="M0.5 0.5V7.5L2.2 6L3.5 8.5L4.5 8L3.3 5.5H5.5Z"></path></svg>
<div class="t" style="left: 629.34px; top: 98.0125px; font-size: 6.5px; color: rgb(20, 20, 20); --b: 102.7; --w: 17.42px; -webkit-text-stroke: 0.25px rgb(20, 20, 20); transform: scaleX(0.9636); transform-origin: 0px 0px;">Select</div>
<svg class="a" style="left:648px;top:100px" width="4" height="3" viewBox="0 0 4 3"><path d="M0 0.5H4L2 2.5Z" fill="#666"></path></svg>
<div class="t" style="left: 629.34px; top: 109.013px; font-size: 6.5px; color: rgb(46, 46, 46); --b: 113.7; --w: 19.32px; -webkit-text-stroke: 0.25px rgb(46, 46, 46); transform: scaleX(0.9721); transform-origin: 0px 0px;">Editing</div>
<div class="a" style="left:664.5px;top:72px;width:1px;height:42px;background:#d9d9d9;"></div>
<svg class="a" style="left:686.5px;top:75px" width="13" height="13" viewBox="0 0 13 13" fill="none" stroke="#2a6cd0" stroke-width="1"><path d="M6 11.5H1.5V0.5H6L8.5 3V5.5 M6 0.5V3H8.5"></path><path d="M5 7.5V12H12V7.5 M8.5 10V6 M7 7.5L8.5 6L10 7.5"></path></svg>
<div class="t" style="left: 669.24px; top: 92.0094px; font-size: 6.5px; color: rgb(20, 20, 20); --b: 96.9; --w: 44.92px; -webkit-text-stroke: 0.25px rgb(20, 20, 20); transform: scaleX(0.8754); transform-origin: 0px 0px;">Create and Share</div>
<div class="t" style="left: 676.74px; top: 100.006px; font-size: 6.5px; color: rgb(20, 20, 20); --b: 105.1; --w: 29.92px; -webkit-text-stroke: 0.25px rgb(20, 20, 20); transform: scaleX(0.8902); transform-origin: 0px 0px;">Adobe PDF</div>
<div class="t" style="left: 672.24px; top: 109.013px; font-size: 6.5px; color: rgb(46, 46, 46); --b: 113.7; --w: 38.92px; -webkit-text-stroke: 0.25px rgb(46, 46, 46); transform: scaleX(0.9124); transform-origin: 0px 0px;">Adobe Acrobat</div>
<div class="a" style="left:719.2px;top:72px;width:1px;height:42px;background:#d9d9d9;"></div>
<svg class="a" style="left:951px;top:110.5px" width="8" height="5" viewBox="0 0 8 5" fill="none" stroke="#777" stroke-width="0.8"><path d="M1 4L4 1L7 4"></path></svg>
<div class="a" style="left:0px;top:116px;width:273px;height:424px;background:#e6e6e6;"></div>
<div class="t" style="left: 6.73px; top: 127.006px; font-size: 6.8px; color: rgb(196, 83, 47); --b: 131.5;">1</div>
<div class="a" style="left:16px;top:125px;width:238px;height:136px;border:1.8px solid #c85a3d;background:#dedede"></div>
<div class="a" style="left:35px;top:131.5px;width:199px;height:58.5px;background:#000;"></div>
<div class="t" style="left: 45.45px; top: 151.008px; font-size: 8.8px; color: rgb(31, 230, 31); font-family: &quot;Liberation Serif&quot;, serif; --b: 158.3; --w: 180.00px; transform: scaleX(0.9555); transform-origin: 0px 0px;">Exploring Syntactic Priming as a Measure of Implicit</div>
<div class="t" style="left: 101.65px; top: 162.014px; font-size: 8.8px; color: rgb(31, 230, 31); font-family: &quot;Liberation Serif&quot;, serif; --b: 168.9; --w: 65.40px; transform: scaleX(0.9734); transform-origin: 0px 0px;">Language Aptitude</div>
<div class="a" style="left:44px;top:200px;width:174px;height:41.5px;background:#333333;"></div>
<div class="t" style="left: 101.42px; top: 211.002px; font-size: 7px; color: rgb(238, 236, 18); font-family: &quot;Liberation Serif&quot;, serif; --b: 215.8; --w: 58.56px; transform: scaleX(0.9471); transform-origin: 0px 0px;">Shaofeng Li (李少锋)</div>
<div class="t" style="left: 99.32px; top: 219.012px; font-size: 7px; color: rgb(238, 236, 18); font-family: &quot;Liberation Serif&quot;, serif; --b: 223.7; --w: 62.86px; transform: scaleX(0.9343); transform-origin: 0px 0px;">Florida State University</div>
<div class="t" style="left: 5.72px; top: 268.007px; font-size: 7px; color: rgb(85, 85, 85); --b: 274;">2</div>
<div class="t" style="left: 5.06px; top: 276.014px; font-size: 6px; color: rgb(85, 85, 85); --b: 281;">★</div>
<div class="a" style="left:18px;top:269px;width:234px;height:132px;background:#fff;"></div>
<div class="a" style="left:18px;top:401px;width:234px;height:1px;background:#dadada;"></div>
<div class="a" style="left:18px;top:269px;width:234px;height:28px;background:#000;"></div>
<div class="t" style="left: 72.8px; top: 280.014px; font-size: 12.6px; color: rgb(233, 184, 36); --b: 289.7; --w: 124.51px; font-weight: bold; transform: scaleX(0.9618); transform-origin: 0px 0px;">Statement of purpose</div>
<div class="t" style="left: 30.14px; top: 309.014px; font-size: 9px; color: rgb(64, 64, 64); --b: 315.9; --w: 204.82px; -webkit-text-stroke: 0.12px rgb(64, 64, 64); transform: scaleX(1.0135); transform-origin: 0px 0px;">This study explores the validity of syntactic priming</div>
<div class="t" style="left: 29.94px; top: 321.002px; font-size: 9px; color: rgb(64, 64, 64); --b: 327.7; --w: 171.82px; -webkit-text-stroke: 0.12px rgb(64, 64, 64); transform: scaleX(1.0042); transform-origin: 0px 0px;">as a measure of implicit language aptitude.</div>
<div class="a" style="left:34px;top:337.6px;width:2.8px;height:2.8px;background:#f0a820;"></div>
<div class="a" style="left:34px;top:358.7px;width:2.8px;height:2.8px;background:#f0a820;"></div>
<div class="a" style="left:34px;top:369.2px;width:2.8px;height:2.8px;background:#f0a820;"></div>
<div class="t" style="left: 39.66px; top: 335.015px; font-size: 8.4px; color: rgb(42, 42, 42); --b: 341.5; --w: 167.67px; -webkit-text-stroke: 0.15px rgb(42, 42, 42); transform: scaleX(0.9958); transform-origin: 0px 0px;">Convergent: whether it’s correlated with other</div>
<div class="t" style="left: 39.66px; top: 345.015px; font-size: 8.4px; color: rgb(42, 42, 42); --b: 351.5; --w: 105.97px; -webkit-text-stroke: 0.15px rgb(42, 42, 42); transform: scaleX(0.9984); transform-origin: 0px 0px;">measures of implicit aptitude</div>
<div class="t" style="left: 39.66px; top: 356.006px; font-size: 8.4px; color: rgb(42, 42, 42); --b: 362.6; --w: 190.87px; -webkit-text-stroke: 0.15px rgb(42, 42, 42); transform: scaleX(1.0033); transform-origin: 0px 0px;">Divergent: whether it’s distinct from explicit aptitude</div>
<div class="t" style="left: 39.66px; top: 366.009px; font-size: 8.4px; color: rgb(42, 42, 42); --b: 372.9; --w: 192.57px; -webkit-text-stroke: 0.15px rgb(42, 42, 42); transform: scaleX(0.9905); transform-origin: 0px 0px;">Predictive: whether it’s correlated with L2 proficiency</div>
<div class="t" style="left: 5.92px; top: 410.007px; font-size: 7px; color: rgb(85, 85, 85); --b: 416;">3</div>
<div class="t" style="left: 5.06px; top: 419.014px; font-size: 6px; color: rgb(85, 85, 85); --b: 423.5;">★</div>
<div class="a" style="left:18px;top:412.3px;width:234px;height:130px;background:#fff;"></div>
<div class="a" style="left:18px;top:412.3px;width:234px;height:27.5px;background:#000;"></div>
<div class="t" style="left: 30.7px; top: 422.003px; font-size: 12.4px; color: rgb(233, 184, 36); --b: 431.8; --w: 205.09px; font-weight: bold; transform: scaleX(0.8008); transform-origin: 0px 0px;">Distinguishing explicit and implicit learning</div>
<div class="a" style="left:27.8px;top:447.4px;width:2.4px;height:2.4px;background:#f0a820;"></div>
<div class="t" style="left: 33.61px; top: 445.014px; font-size: 7.3px; color: rgb(42, 42, 42); --b: 451.1; --w: 186.68px; -webkit-text-stroke: 0.15px rgb(42, 42, 42); transform: scaleX(0.9751); transform-origin: 0px 0px;">Dual-process theories of learning (Evans &amp; Frankish, 2009)</div>
<div class="a" style="left:35.1px;top:455.6px;width:1.9px;height:1.9px;background:#4aa8d8;"></div>
<div class="t" style="left: 39.14px; top: 454.002px; font-size: 6.4px; color: rgb(42, 42, 42); --b: 459; --w: 194.21px; -webkit-text-stroke: 0.15px rgb(42, 42, 42); transform: scaleX(1.0014); transform-origin: 0px 0px;">Explicit learning: rule-based, analytic, fast, flexible, immediate, short-</div>
<div class="t" style="left: 39.14px; top: 462.005px; font-size: 6.4px; color: rgb(42, 42, 42); --b: 467.3; -webkit-text-stroke: 0.15px rgb(42, 42, 42);">lived</div>
<div class="a" style="left:35.1px;top:472.20000000000005px;width:1.9px;height:1.9px;background:#4aa8d8;"></div>
<div class="t" style="left: 39.14px; top: 471.008px; font-size: 6.4px; color: rgb(42, 42, 42); --b: 475.6; --w: 186.91px; -webkit-text-stroke: 0.15px rgb(42, 42, 42); transform: scaleX(1.008); transform-origin: 0px 0px;">Implicit learning: data-driven, intuitive, slow, inflexible, sustainable</div>
<div class="a" style="left:35.1px;top:492.90000000000003px;width:1.9px;height:1.9px;background:#4aa8d8;"></div>
<div class="t" style="left: 39.14px; top: 491.005px; font-size: 6.4px; color: rgb(42, 42, 42); --b: 496.3; --w: 189.81px; -webkit-text-stroke: 0.15px rgb(42, 42, 42); transform: scaleX(1.0063); transform-origin: 0px 0px;">Explicit learning abilities are uncorrelated or negatively with implicit</div>
<div class="t" style="left: 39.14px; top: 499.014px; font-size: 6.4px; color: rgb(42, 42, 42); --b: 503.7; --w: 189.01px; -webkit-text-stroke: 0.15px rgb(42, 42, 42); transform: scaleX(0.9638); transform-origin: 0px 0px;">learning&nbsp; (Gebauer &amp; Mackintosh, 2007; Reber et al, 1991; Robinson,</div>
<div class="t" style="left: 39.14px; top: 507.002px; font-size: 6.4px; color: rgb(42, 42, 42); --b: 512; -webkit-text-stroke: 0.15px rgb(42, 42, 42);">2005)</div>
<div class="a" style="left:35.1px;top:517.4px;width:1.9px;height:1.9px;background:#4aa8d8;"></div>
<div class="t" style="left: 39.14px; top: 516.005px; font-size: 6.4px; color: rgb(42, 42, 42); --b: 520.8; --w: 193.71px; -webkit-text-stroke: 0.15px rgb(42, 42, 42); transform: scaleX(1.0117); transform-origin: 0px 0px;">Patients with cognitive deficits in explicit learning have intact implicit</div>
<div class="t" style="left: 39.14px; top: 523.014px; font-size: 6.4px; color: rgb(42, 42, 42); --b: 528.2; --w: 201.51px; -webkit-text-stroke: 0.15px rgb(42, 42, 42); transform: scaleX(0.9697); transform-origin: 0px 0px;">learning abilities (Arciuli, 2017) and vice versa (Jiménez-Fernández et al.,</div>
<div class="t" style="left: 39.14px; top: 532.011px; font-size: 6.4px; color: rgb(42, 42, 42); --b: 536.9; -webkit-text-stroke: 0.15px rgb(42, 42, 42);">2011)</div>
<div class="a" style="left:27.8px;top:483.9px;width:2.4px;height:2.4px;background:#f0a820;"></div>
<div class="t" style="left: 33.61px; top: 482.014px; font-size: 7.3px; color: rgb(42, 42, 42); --b: 487.6; --w: 87.68px; -webkit-text-stroke: 0.15px rgb(42, 42, 42); transform: scaleX(0.9869); transform-origin: 0px 0px;">Evidence for the separation</div>
<div class="a" style="left:263px;top:118px;width:8px;height:422px;background:#dcdcdc;"></div>
<div class="a" style="left:263px;top:118px;width:8px;height:7.5px;background:#fff;border:1px solid #d0d0d0"></div>
<div class="a" style="left:265px;top:120.5px;width:0;height:0;border-left:2px solid transparent;border-right:2px solid transparent;border-bottom:2.5px solid #444"></div>
<div class="a" style="left:263px;top:125px;width:8px;height:44.5px;background:#fff;border:1px solid #d0d0d0"></div>
<div class="a" style="left:273px;top:116px;width:1px;height:424px;background:#d2d2d2;"></div>
<div class="a" style="left:274px;top:116px;width:688px;height:424px;background:#e6e6e6;"></div>
<div class="a" style="left:286px;top:146px;width:656px;height:370px;background:#dedede;border:1px solid #d4d4d4"></div>
<div class="a" style="left:334.3px;top:160.8px;width:555.5px;height:162px;background:#000;"></div>
<div class="t" style="left: 363.88px; top: 216.015px; font-size: 23px; color: rgb(31, 230, 31); font-family: &quot;Liberation Serif&quot;, serif; --b: 235.4; --w: 504.24px; transform: scaleX(1.0239); transform-origin: 0px 0px;">Exploring Syntactic Priming as a Measure of Implicit</div>
<div class="t" style="left: 521.28px; top: 246.012px; font-size: 23px; color: rgb(31, 230, 31); font-family: &quot;Liberation Serif&quot;, serif; --b: 265.1; --w: 181.94px; transform: scaleX(1.0358); transform-origin: 0px 0px;">Language Aptitude</div>
<div class="a" style="left:357.2px;top:351.5px;width:488.6px;height:115.8px;background:#333333;"></div>
<div class="t" style="left: 520.07px; top: 380.014px; font-size: 18.3px; color: rgb(238, 236, 18); font-family: &quot;Liberation Serif&quot;, serif; --b: 395.1; --w: 162.06px; transform: scaleX(1.0089); transform-origin: 0px 0px;">Shaofeng Li (<span style="-webkit-text-stroke:0.3px #eeec12">李少锋</span>)</div>
<div class="t" style="left: 514.58px; top: 403.008px; font-size: 18px; color: rgb(238, 236, 18); font-family: &quot;Liberation Serif&quot;, serif; --b: 418; --w: 174.94px; transform: scaleX(1.0113); transform-origin: 0px 0px;">Florida State University</div>
<div class="a" style="left:953px;top:117.5px;width:7.5px;height:400px;background:#dcdcdc;"></div>
<div class="a" style="left:953px;top:118px;width:7.5px;height:7.5px;background:#fff;border:1px solid #d0d0d0"></div>
<div class="a" style="left:954.8px;top:120.5px;width:0;height:0;border-left:2px solid transparent;border-right:2px solid transparent;border-bottom:2.5px solid #444"></div>
<div class="a" style="left:953px;top:125px;width:7.5px;height:14px;background:#fff;border:1px solid #d0d0d0"></div>
<div class="a" style="left:953px;top:511px;width:7.5px;height:7.5px;background:#fff;border:1px solid #d0d0d0"></div>
<div class="a" style="left:954.8px;top:513.8px;width:0;height:0;border-left:2px solid transparent;border-right:2px solid transparent;border-top:2.5px solid #444"></div>
<svg class="a" style="left:954.5px;top:519px" width="6" height="17" viewBox="0 0 6 17"><path d="M0.6 4.2H5.4L3 1.8Z" fill="#666"></path><rect x="0.6" y="5.2" width="4.8" height="1" fill="#666"></rect><rect x="0.6" y="11" width="4.8" height="1" fill="#666"></rect><path d="M0.6 12.8H5.4L3 15.2Z" fill="#666"></path></svg>
<div class="a" style="left:962px;top:38px;width:167px;height:502px;background:linear-gradient(to right,#45464a 0%,#3a3b3e 45%,#2b2c2e 100%)"></div>
<div class="a" style="left:961px;top:38px;width:1.5px;height:502px;background:#1c1c1c;"></div>
<div class="a" style="left:962px;top:38px;width:167px;height:30px;background:linear-gradient(#0d0d0d,#151515 70%,rgba(21,21,21,0.85))"></div>
<svg class="a" style="left:1037px;top:41.5px" width="16" height="10.5" viewBox="0 0 16 10.5"><path d="M8 0.8L15.2 10H0.8Z" fill="#8c8c8c" stroke="#8c8c8c" stroke-width="0.8" stroke-linejoin="round"></path></svg>
<div class="a" style="left:968.2px;top:66.5px;width:153.6px;height:86.3px;border:1.1px solid #1d9c48;border-radius:2px;background:#9da3a6"></div>
<div class="a" style="left:969.6px;top:67.8px;width:150.8px;height:83.3px;overflow:hidden;background:#b9bcbb"><div class="a" style="left:0;top:0;width:151px;height:84px;filter:blur(0.6px)">
<div class="a" style="left:0px;top:0px;width:25px;height:84px;background:linear-gradient(#cdd1cc,#c2c7c0 60%,#a9aca4);"></div>
<div class="a" style="left:6.7px;top:39.5px;width:15.5px;height:11px;background:radial-gradient(ellipse,#6d9660 25%,#4f7a45 55%,rgba(80,110,70,0) 72%);"></div>
<div class="a" style="left:9.4px;top:49.5px;width:11.8px;height:9.7px;background:#262626;border-radius:1px 1px 3px 3px"></div>
<div class="a" style="left:0px;top:59px;width:25px;height:8px;background:#5a4d44;"></div>
<div class="a" style="left:24px;top:0px;width:3px;height:84px;background:#6f6e70;"></div>
<div class="a" style="left:27px;top:0px;width:80px;height:84px;background:repeating-linear-gradient(to right,#5d5a5c 0,#8a7a6a 1.5px,#4a5a76 3px,#aea490 4.5px,#55575c 6px,#8a4a43 7.5px,#5a6a58 9px);"></div>
<div class="a" style="left:0px;top:0px;width:151px;height:5px;background:#a9aeb0;"></div>
<div class="a" style="left:27px;top:48.8px;width:80px;height:2.8px;background:#77777a;"></div>
<div class="a" style="left:27px;top:20px;width:80px;height:2.5px;background:#66666a;"></div>
<div class="a" style="left:99.3px;top:0px;width:8.3px;height:84px;background:repeating-linear-gradient(to right,#4b4b4f 0,#6a8aa0 2px,#c8c0a8 4px,#4b4b4f 6px);"></div>
<div class="a" style="left:107.6px;top:0px;width:7px;height:84px;background:#4a4a4b;"></div>
<div class="a" style="left:114.4px;top:0px;width:37px;height:84px;background:linear-gradient(to right,#c9d2d5,#e6ecee 25%,#d5dde0 55%,#e8edef 70%,#dfe6e8);"></div>
<div class="a" style="left:132px;top:0px;width:1.5px;height:84px;background:#c3ccd0;"></div>
<div class="a" style="left:136px;top:5px;width:15px;height:79px;background:repeating-linear-gradient(#e4eaec 0,#e4eaec 1px,#d2dadd 1.5px,#e4eaec 2px);"></div>
<div class="a" style="left:73.7px;top:39px;width:25.6px;height:45px;background:#433f40;border-radius:9px 9px 2px 2px"></div>
<div class="a" style="left:40px;top:59px;width:60px;height:30px;background:linear-gradient(to right,#687384,#7a8593);border-radius:12px 16px 0 0"></div>
<div class="a" style="left:50px;top:57px;width:16px;height:8px;background:#b99d8f;"></div>
<div class="a" style="left:45px;top:35px;width:26px;height:30px;background:#d2b4a6;border-radius:40% 40% 48% 48%"></div>
<div class="a" style="left:46px;top:34px;width:23.6px;height:3.5px;background:#2a2626;border-radius:2px 2px 4px 4px"></div>
<div class="a" style="left:46.5px;top:44px;width:10.5px;height:4.5px;background:rgba(235,225,220,0.25);border-radius:2px;border:0.6px solid #5a5252"></div>
<div class="a" style="left:59px;top:44px;width:10.5px;height:4.5px;background:rgba(235,225,220,0.25);border-radius:2px;border:0.6px solid #5a5252"></div>
<div class="a" style="left:42px;top:36px;width:3px;height:18px;background:#1f1f22;border-radius:2px"></div>
<div class="a" style="left:71px;top:40px;width:3px;height:15px;background:#1f1f22;border-radius:2px"></div>
<div class="a" style="left:52px;top:55px;width:10px;height:2.5px;background:#a77a70;border-radius:1px"></div>
</div></div>
<div class="a" style="left:969.7px;top:133.9px;width:54px;height:17px;background:rgba(15,15,15,0.82);"></div>
<div class="a" style="left:971px;top:134.5px;width:18px;height:16px;background:rgba(60,60,60,0.6);"></div>
<svg class="a" style="left:975px;top:135.5px" width="12" height="14" viewBox="0 0 12 14" fill="none">
<rect x="4" y="0.8" width="4" height="8" rx="2" fill="#e6e6e6"></rect>
<path d="M4 5.5H8V6.8A2 2 0 0 1 4 6.8Z" fill="#41d641"></path>
<path d="M1.8 6.3C1.8 9 3.7 10.6 6 10.6C8.3 10.6 10.2 9 10.2 6.3" stroke="#e6e6e6" stroke-width="1.3"></path>
<path d="M6 10.6V12.5M3.8 13H8.2" stroke="#e6e6e6" stroke-width="1.3"></path>
</svg>
<div class="t" style="left: 991.8px; top: 137.15px; font-size: 10.5px; color: rgb(240, 240, 240); --w: 28.50px; -webkit-text-stroke: 0.2px rgb(240, 240, 240); transform: scaleX(0.8636); transform-origin: 0px 0px;">李少锋</div>
<div class="a" style="left:969px;top:160.3px;width:153px;height:85.79999999999998px;background:#222326;border:1px solid #545559;border-radius:2px"></div>
<div class="a" style="left:1023.2px;top:175.1px;width:44px;height:44px;border-radius:50%;background:#fff;overflow:hidden">
<div class="a" style="left:8px;top:10px;width:28px;height:26px;background:radial-gradient(circle,#eef3f5 30%,#fff 70%);"></div>
<div class="a" style="left:13.5px;top:27px;width:17px;height:18px;background:#c9aa8a;clip-path:polygon(22% 0,78% 0,100% 100%,0 100%)"></div>
<div class="a" style="left:16px;top:12px;width:12px;height:13px;background:#c4e2ec;border-radius:3px 3px 1px 1px"></div>
<div class="a" style="left:14px;top:13px;width:3px;height:16px;background:#f8f8f8;border-radius:2px"></div>
<div class="a" style="left:27px;top:13px;width:3px;height:16px;background:#f8f8f8;border-radius:2px"></div>
<div class="a" style="left:19px;top:0px;width:6px;height:8.5px;background:#84302a;border-radius:45% 45% 40% 40%"></div>
<div class="a" style="left:21.2px;top:7px;width:1.6px;height:15px;background:#8a4a40;border-radius:1px"></div>
<div class="a" style="left:19px;top:27.5px;width:6px;height:3px;background:#f0e6de;border-radius:2px"></div>
</div>
<div class="a" style="left:971.2px;top:227.7px;width:17.8px;height:17.5px;background:#f57c1f;"></div>
<div class="a" style="left:977.2px;top:230.8px;width:5.8px;height:5.8px;background:#fff;border-radius:50%"></div>
<div class="a" style="left:974px;top:237.2px;width:12.2px;height:6.2px;background:#fff;border-radius:6px 6px 0 0"></div>
<div class="a" style="left:989px;top:227.7px;width:45px;height:17.5px;background:#111213;"></div>
<svg class="a" style="left:994.6px;top:229.8px" width="10.8" height="12.6" viewBox="0 0 12 14" fill="none"><rect x="3.5" y="0.5" width="5.3" height="7.7" rx="2.65" fill="#eeeeee"></rect><path d="M1.6 6.2C1.6 8.9 3.6 10.4 6.15 10.4C8.7 10.4 10.7 8.9 10.7 6.2" stroke="#eeeeee" stroke-width="1.2"></path><path d="M6.15 10.4V12.6M3.6 12.9H8.7" stroke="#eeeeee" stroke-width="1.2"></path><path d="M0.6 12.5L11.9 1.6" stroke="#111" stroke-width="2.4"></path><path d="M0.6 12.5L11.9 1.6" stroke="#e0392f" stroke-width="1.2"></path></svg>
<div class="t" style="left: 1011.71px; top: 232px; font-size: 9.8px; color: rgb(242, 242, 242); --b: 239.8; --w: 19.58px; transform: scaleX(0.9985); transform-origin: 0px 0px;">ZHY</div>
<div class="a" style="left:969px;top:254.5px;width:153px;height:86.0px;background:#222326;border:1px solid #545559;border-radius:2px"></div>
<div class="a" style="left:1023px;top:269.4px;width:44px;height:44px;background:#0f7bfc;border-radius:50%"></div>
<div class="t" style="left: 1029px; top: 284.2px; font-size: 16.8px; color: rgb(255, 255, 255); --w: 31.60px; -webkit-text-stroke: 0.25px rgb(255, 255, 255); transform: scaleX(0.9294); transform-origin: 0px 0px;">湖大</div>
<div class="a" style="left:970.2px;top:322.2px;width:62.6px;height:17.3px;background:#111213;"></div>
<svg class="a" style="left:975px;top:324.3px" width="10.8" height="12.6" viewBox="0 0 12 14" fill="none"><rect x="3.5" y="0.5" width="5.3" height="7.7" rx="2.65" fill="#eeeeee"></rect><path d="M1.6 6.2C1.6 8.9 3.6 10.4 6.15 10.4C8.7 10.4 10.7 8.9 10.7 6.2" stroke="#eeeeee" stroke-width="1.2"></path><path d="M6.15 10.4V12.6M3.6 12.9H8.7" stroke="#eeeeee" stroke-width="1.2"></path><path d="M0.6 12.5L11.9 1.6" stroke="#111" stroke-width="2.4"></path><path d="M0.6 12.5L11.9 1.6" stroke="#e0392f" stroke-width="1.2"></path></svg>
<div class="t" style="left: 991.5px; top: 326.4px; font-size: 10px; color: rgb(240, 240, 240); --w: 38.20px; -webkit-text-stroke: 0.2px rgb(240, 240, 240); transform: scaleX(0.955); transform-origin: 0px 0px;">李刚湖大</div>
<div class="a" style="left:969px;top:348.5px;width:153px;height:86.69999999999999px;background:#222326;border:1px solid #545559;border-radius:2px"></div>
<div class="a" style="left:1023px;top:364.3px;width:43px;height:43px;border-radius:50%;overflow:hidden;background:#3a3528">
<div class="a" style="left:-4px;top:-2px;width:50px;height:30px;background:radial-gradient(ellipse at 50% 90%,#cfc0a0 10%,#8d7d60 45%,#5a4e3c 75%);"></div>
<div class="a" style="left:3px;top:9px;width:40px;height:40px;background:radial-gradient(ellipse at 50% 45%,#f0e0c6 25%,#e6cfb0 55%,#cdb08c 80%,rgba(150,120,90,0) 100%);border-radius:50%"></div>
<div class="a" style="left:0px;top:20px;width:6px;height:15px;background:#dcbf9c;border-radius:50%"></div>
<div class="a" style="left:17.5px;top:25px;width:4px;height:3px;background:#2b2219;border-radius:50%"></div>
<div class="a" style="left:30.5px;top:26px;width:4px;height:3px;background:#2b2219;border-radius:50%"></div>
<div class="a" style="left:23px;top:31px;width:5px;height:5px;background:radial-gradient(circle,#f6e6d0 30%,rgba(240,220,200,0) 70%);"></div>
<div class="a" style="left:21.5px;top:39px;width:5.5px;height:2.5px;background:#a85e54;border-radius:50%"></div>
</div>
<div class="a" style="left:970px;top:416px;width:43.8px;height:17.7px;background:#111213;"></div>
<svg class="a" style="left:975.2px;top:418px" width="10.8" height="12.6" viewBox="0 0 12 14" fill="none"><rect x="3.5" y="0.5" width="5.3" height="7.7" rx="2.65" fill="#eeeeee"></rect><path d="M1.6 6.2C1.6 8.9 3.6 10.4 6.15 10.4C8.7 10.4 10.7 8.9 10.7 6.2" stroke="#eeeeee" stroke-width="1.2"></path><path d="M6.15 10.4V12.6M3.6 12.9H8.7" stroke="#eeeeee" stroke-width="1.2"></path><path d="M0.6 12.5L11.9 1.6" stroke="#111" stroke-width="2.4"></path><path d="M0.6 12.5L11.9 1.6" stroke="#e0392f" stroke-width="1.2"></path></svg>
<div class="t" style="left: 991.4px; top: 420.8px; font-size: 10.4px; color: rgb(240, 240, 240); --w: 20.30px; -webkit-text-stroke: 0.2px rgb(240, 240, 240); transform: scaleX(1.015); transform-origin: 0px 0px;">顾磊</div>
<div class="a" style="left:969px;top:442.8px;width:153px;height:86.40000000000003px;background:#1c1d1f;border:1px solid #545559;border-radius:2px"></div>
<div class="a" style="left:1023.1px;top:458px;width:44px;height:44px;background:linear-gradient(#0a6cf0,#0b55c0);border-radius:50%"></div>
<div class="t" style="left: 1037.16px; top: 473.007px; font-size: 16px; color: rgb(220, 220, 220); --b: 485.5; --w: 15.98px; transform: scaleX(1.2832); transform-origin: 0px 0px;">Q</div>
<div class="a" style="left:962px;top:470px;width:167px;height:70px;background:linear-gradient(rgba(10,10,10,0),rgba(10,10,10,0.55) 60%,rgba(8,8,8,0.95))"></div>
<div class="a" style="left:970.2px;top:510.2px;width:69.1px;height:17.5px;background:#0b0b0c;"></div>
<svg class="a" style="left:974.8px;top:512.2px" width="10.8" height="12.6" viewBox="0 0 12 14" fill="none"><rect x="3.5" y="0.5" width="5.3" height="7.7" rx="2.65" fill="#a9a9a9"></rect><path d="M1.6 6.2C1.6 8.9 3.6 10.4 6.15 10.4C8.7 10.4 10.7 8.9 10.7 6.2" stroke="#a9a9a9" stroke-width="1.2"></path><path d="M6.15 10.4V12.6M3.6 12.9H8.7" stroke="#a9a9a9" stroke-width="1.2"></path><path d="M0.6 12.5L11.9 1.6" stroke="#0b0b0c" stroke-width="2.4"></path><path d="M0.6 12.5L11.9 1.6" stroke="#b83a30" stroke-width="1.2"></path></svg>
<div class="t" style="left: 991.74px; top: 514.001px; font-size: 11.5px; color: rgb(189, 189, 189); --b: 523.2; --w: 44.72px; transform: scaleX(0.8823); transform-origin: 0px 0px;">QI WANG</div>
<svg class="a" style="left:1037px;top:525.5px" width="16" height="11" viewBox="0 0 16 11"><path d="M0.8 0.8H15.2L8 10.2Z" fill="#ffffff" stroke="#fff" stroke-width="0.8" stroke-linejoin="round"></path></svg>
<div class="a" style="left:1122.5px;top:462px;width:10px;height:51px;background:#22252b;border-radius:3px;border:1px solid #3a3e46"></div>
<div class="a" style="left:1124.5px;top:466.0px;width:5px;height:1.6px;background:#3a4048;"></div>
<div class="a" style="left:1124.5px;top:469.4px;width:5px;height:1.6px;background:#3a4048;"></div>
<div class="a" style="left:1124.5px;top:472.8px;width:5px;height:1.6px;background:#3a4048;"></div>
<div class="a" style="left:1124.5px;top:476.2px;width:5px;height:1.6px;background:#d08a3a;"></div>
<div class="a" style="left:1124.5px;top:479.6px;width:5px;height:1.6px;background:#d0a03a;"></div>
<div class="a" style="left:1124.5px;top:483.0px;width:5px;height:1.6px;background:#c8b03a;"></div>
<div class="a" style="left:1124.5px;top:486.4px;width:5px;height:1.6px;background:#b8c03a;"></div>
<div class="a" style="left:1124.5px;top:489.8px;width:5px;height:1.6px;background:#9ac040;"></div>
<div class="a" style="left:1124.5px;top:493.2px;width:5px;height:1.6px;background:#7ac048;"></div>
<div class="a" style="left:1124.5px;top:496.6px;width:5px;height:1.6px;background:#5ab850;"></div>
<div class="a" style="left:1124.5px;top:500.0px;width:5px;height:1.6px;background:#4ab060;"></div>
<div class="a" style="left:1124.5px;top:503.4px;width:5px;height:1.6px;background:#40a870;"></div>
<div class="a" style="left:1124.5px;top:506.8px;width:5px;height:1.6px;background:#3aa080;"></div>
<div class="a" style="left:921.3px;top:72.3px;width:207.7px;height:30.6px;background:#3b3c3f;border-radius:3px;box-shadow:0 1px 2px rgba(0,0,0,0.3)"></div>
<div class="a" style="left:951px;top:75px;width:1px;height:25px;background:#2e2f32;"></div>
<svg class="a" style="left:930.5px;top:80.6px" width="12.0" height="14.0" viewBox="0 0 12 14" fill="none"><rect x="3.5" y="0.5" width="5.3" height="7.7" rx="2.65" fill="#8e9196"></rect><path d="M1.6 6.2C1.6 8.9 3.6 10.4 6.15 10.4C8.7 10.4 10.7 8.9 10.7 6.2" stroke="#8e9196" stroke-width="1.2"></path><path d="M6.15 10.4V12.6M3.6 12.9H8.7" stroke="#8e9196" stroke-width="1.2"></path><path d="M0.6 12.5L11.9 1.6" stroke="#3b3c3f" stroke-width="2.4"></path><path d="M0.6 12.5L11.9 1.6" stroke="#d0453a" stroke-width="1.2"></path></svg>
<div class="t" style="left: 959.2px; top: 81.6px; font-size: 12px; color: rgb(242, 242, 242); --w: 81.80px; -webkit-text-stroke: 0.2px rgb(242, 242, 242); transform: scaleX(0.8701); transform-origin: 0px 0px;">正在讲话: 李少锋;</div>
<svg class="a" style="left:1046px;top:74px" width="48" height="27" viewBox="0 0 48 27">
<defs><linearGradient id="lg" x1="0" y1="1" x2="1" y2="0"><stop offset="0" stop-color="#606266"></stop><stop offset="1" stop-color="#45474a"></stop></linearGradient></defs>
<path d="M10 23.7L4.7 16.9L17.2 3.2L23 9.5L31.1 3.7L42.8 16.9L38.3 23.7L30.9 17.2L24.4 23.7L17.5 17Z" fill="url(#lg)" stroke="url(#lg)" stroke-width="1.6" stroke-linejoin="round"></path>
<path d="M17.2 3.5L22.8 9.6L17.4 16.5Z" fill="#505255"></path>
</svg>
<div class="a" style="left:1101px;top:79.3px;width:1px;height:17px;background:#606165;"></div>
<svg class="a" style="left:1108px;top:82px" width="14" height="11" viewBox="0 0 14 11"><path d="M5.5 0.5L0.5 5L5.5 9.5V6.5C9 6.3 11.5 7.5 13.3 10.5C13 6 10.5 3.3 5.5 3.2Z" fill="#9c9c9c"></path></svg>
<div class="a" style="left:11px;top:45px;width:124px;height:26.3px;border-radius:4px;overflow:hidden">
<div class="a" style="left:0px;top:0px;width:71px;height:27px;background:rgba(0,0,0,0.56);"></div>
<div class="a" style="left:71px;top:0px;width:53px;height:27px;background:rgba(95,95,95,0.6);"></div>
</div>
<div class="a" style="left:18.7px;top:52.5px;width:11.4px;height:11.4px;border-radius:50%;border:1.1px solid #c9352c"></div>
<div class="a" style="left:20.8px;top:54.6px;width:7.2px;height:7.2px;background:#e2382f;border-radius:50%"></div>
<div class="t" style="left: 40.3px; top: 53.35px; font-size: 11.3px; color: rgb(255, 255, 255); --w: 31.10px; -webkit-text-stroke: 0.3px rgb(255, 255, 255); transform: scaleX(0.9424); transform-origin: 0px 0px;">录制中</div>
<div class="a" style="left:89.3px;top:53.2px;width:3.4px;height:10.1px;background:#fff;border-radius:2px"></div>
<div class="a" style="left:96.6px;top:53.2px;width:3.4px;height:10.1px;background:#fff;border-radius:2px"></div>
<div class="a" style="left:115.6px;top:52.9px;width:10.8px;height:10.4px;background:#fff;border-radius:1.5px"></div>
<div class="a" style="left:-10px;top:448.5px;width:36.5px;height:26.7px;background:#58595b;border-radius:13px"></div>
<svg class="a" style="left:5px;top:454.5px" width="16" height="14" viewBox="0 0 16 14" fill="#f4f4f4"><rect x="0.3" y="1" width="2.4" height="2.4" rx="1.2"></rect><rect x="4.3" y="1.3" width="11" height="1.8" rx="0.9"></rect><rect x="2.8" y="5.8" width="2.4" height="2.4" rx="1.2"></rect><rect x="6.8" y="6.1" width="8.5" height="1.8" rx="0.9"></rect><rect x="0.3" y="10.6" width="2.4" height="2.4" rx="1.2"></rect><rect x="4.3" y="10.9" width="11" height="1.8" rx="0.9"></rect></svg>
<div class="a" style="left:947px;top:281px;width:15px;height:34.6px;background:#5a5b5d;border-radius:3px 0 0 3px"></div>
<svg class="a" style="left:951.5px;top:293px" width="6" height="9" viewBox="0 0 6 9" fill="none" stroke="#b8b8b8" stroke-width="1"><path d="M1.2 1L4.8 4.5L1.2 8"></path></svg>
<div class="a" style="left:0px;top:540px;width:1129px;height:2px;background:#fafafa;"></div>

</body></html>
